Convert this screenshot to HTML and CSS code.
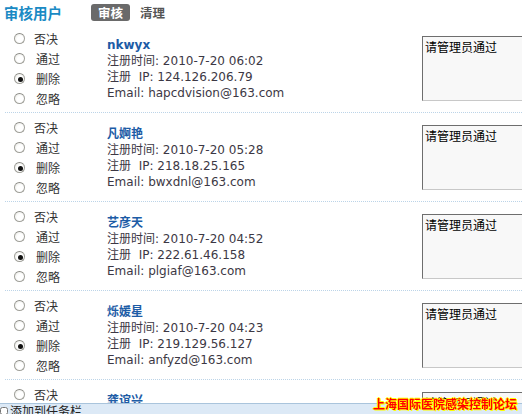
FILE: index.html
```html
<!DOCTYPE html>
<html lang="zh-CN">
<head>
  <meta charset="UTF-8">
  <title>审核用户</title>
  <link rel="stylesheet" href="styles.css">
</head>
<body>

  <!-- 标题 + 选项卡 -->
  <div class="head">
    <span class="title">审核用户</span>
    <a class="tab on">审核</a>
    <a class="tab">清理</a>
  </div>

  <!-- 待审核列表 -->
  <div class="list">
    <div class="row">
      <div class="opts">
        <label class="first"><input type="radio" name="m1"> 否决</label>
        <label><input type="radio" name="m1"> 通过</label>
        <label><input type="radio" name="m1" checked> 删除</label>
        <label><input type="radio" name="m1"> 忽略</label>
      </div>
      <div class="info">
        <a class="name">nkwyx</a>
        <p>注册时间: 2010-7-20 06:02</p>
        <p>注册&nbsp; IP: 124.126.206.79</p>
        <p>Email: hapcdvision@163.com</p>
      </div>
      <textarea class="reason">请管理员通过</textarea>
    </div>

    <div class="row">
      <div class="opts">
        <label class="first"><input type="radio" name="m2"> 否决</label>
        <label><input type="radio" name="m2"> 通过</label>
        <label><input type="radio" name="m2" checked> 删除</label>
        <label><input type="radio" name="m2"> 忽略</label>
      </div>
      <div class="info">
        <a class="name">凡婀艳</a>
        <p>注册时间: 2010-7-20 05:28</p>
        <p>注册&nbsp; IP: 218.18.25.165</p>
        <p>Email: bwxdnl@163.com</p>
      </div>
      <textarea class="reason">请管理员通过</textarea>
    </div>

    <div class="row">
      <div class="opts">
        <label class="first"><input type="radio" name="m3"> 否决</label>
        <label><input type="radio" name="m3"> 通过</label>
        <label><input type="radio" name="m3" checked> 删除</label>
        <label><input type="radio" name="m3"> 忽略</label>
      </div>
      <div class="info">
        <a class="name">艺彦天</a>
        <p>注册时间: 2010-7-20 04:52</p>
        <p>注册&nbsp; IP: 222.61.46.158</p>
        <p>Email: plgiaf@163.com</p>
      </div>
      <textarea class="reason">请管理员通过</textarea>
    </div>

    <div class="row">
      <div class="opts">
        <label class="first"><input type="radio" name="m4"> 否决</label>
        <label><input type="radio" name="m4"> 通过</label>
        <label><input type="radio" name="m4" checked> 删除</label>
        <label><input type="radio" name="m4"> 忽略</label>
      </div>
      <div class="info">
        <a class="name">烁媛星</a>
        <p>注册时间: 2010-7-20 04:23</p>
        <p>注册&nbsp; IP: 219.129.56.127</p>
        <p>Email: anfyzd@163.com</p>
      </div>
      <textarea class="reason">请管理员通过</textarea>
    </div>

    <div class="row">
      <div class="opts">
        <label class="first"><input type="radio" name="m5"> 否决</label>
        <label><input type="radio" name="m5"> 通过</label>
        <label><input type="radio" name="m5" checked> 删除</label>
        <label><input type="radio" name="m5"> 忽略</label>
      </div>
      <div class="info">
        <a class="name">龚谊兴</a>
        <p>注册时间: 2010-7-20 04:01</p>
        <p>注册&nbsp; IP: 59.42.117.20</p>
        <p>Email: qwerty@163.com</p>
      </div>
      <textarea class="reason">请管理员通过</textarea>
    </div>
  </div>

  <!-- 底部任务栏 -->
  <div class="taskbar">
    <label><input type="checkbox"> 添加到任务栏</label>
  </div>

  <!-- 水印 -->
  <div class="mark">上海国际医院感染控制论坛</div>

</body>
</html>
```

FILE: styles.css
```css
html, body {
  margin: 0;
  padding: 0;
  height: 100%;
  overflow: hidden;
  background: white;
  font-family: "DejaVu Sans", "Noto Sans CJK SC", sans-serif;
  font-size: 12px;
  color: #333;
}

/* 标题 */
.head {
  height: 24px;
  display: flex;
  align-items: center;
  padding-left: 4px;
}

.title {
  font-family: "Noto Sans CJK SC", sans-serif;
  font-size: 14.5px;
  font-weight: bold;
  color: #1a8ac4;
  margin-right: 22px;
}

.tab {
  font-family: "Noto Sans CJK SC", sans-serif;
  font-size: 12.5px;
  font-weight: bold;
  color: #555;
  height: 17px;
  line-height: 17px;
  padding: 0 7px;
  margin-right: 3px;
  border-radius: 3px;
}

.tab.on {
  background: #6a6a6a;
  color: white;
  margin-left: 7px;
}

/* 列表 */
.list {
  width: 540px;
}

.row {
  display: grid;
  grid-template-columns: 102px 315px 120px;
  height: 88px;
  margin-left: 5px;
  border-bottom: 1px dotted #bcd4e8;
}

.opts {
  padding-top: 4px;
  padding-left: 9px;
}

.opts label {
  display: flex;
  align-items: center;
  height: 20px;
  font-family: "Noto Sans CJK SC", sans-serif;
  color: #333;
}

.opts input {
  appearance: none;
  width: 11px;
  height: 11px;
  margin: 0 11px 0 0;
  border: 1px solid #a0a09a;
  border-top-color: #8a8a84;
  border-radius: 50%;
  background: radial-gradient(circle at 60% 60%, #fff 40%, #e6e6e0 100%);
  position: relative;
}

.opts label.first input {
  margin-right: 9px;
}

.opts input:checked::after {
  content: "";
  position: absolute;
  left: 3px;
  top: 3px;
  width: 5px;
  height: 5px;
  border-radius: 50%;
  background: #111;
}

.info {
  padding-top: 13px;
}

.info p {
  margin: 0;
  line-height: 16px;
  color: #3c3844;
}

.name {
  display: block;
  line-height: 16px;
  font-weight: bold;
  color: #1d5ca6;
}

.reason {
  margin-top: 12px;
  width: 120px;
  height: 65px;
  box-sizing: border-box;
  padding: 1px 2px;
  resize: none;
  font-family: "Noto Sans CJK SC", sans-serif;
  font-size: 12px;
  color: #000;
  background: #f8f8f8;
  border: 1px solid #c8c8c8;
  border-top-color: #6e6e6e;
  border-left-color: #6e6e6e;
}

/* 底部任务栏 */
.taskbar {
  position: fixed;
  left: 0;
  right: 0;
  bottom: 0;
  height: 10px;
  background: #dce9f6;
  border-top: 1px solid #a9c4dc;
  overflow: hidden;
}

.taskbar label {
  display: flex;
  align-items: flex-start;
  font-family: "Noto Sans CJK SC", sans-serif;
  font-size: 12px;
  line-height: 14px;
  color: #222;
}

.taskbar input {
  width: 8px;
  height: 8px;
  margin: 3px 2px 0 0;
}

/* 水印 */
.mark {
  position: fixed;
  right: 5px;
  bottom: 3px;
  font-family: "Noto Sans CJK SC", sans-serif;
  font-size: 12px;
  font-weight: bold;
  line-height: 14px;
  color: #ff0000;
  text-shadow: 1px 1px 0 #ffff00, -1px 0 0 #ffff00, 0 -1px 0 #ffff00, 1px 0 0 #ffff00;
}
```
